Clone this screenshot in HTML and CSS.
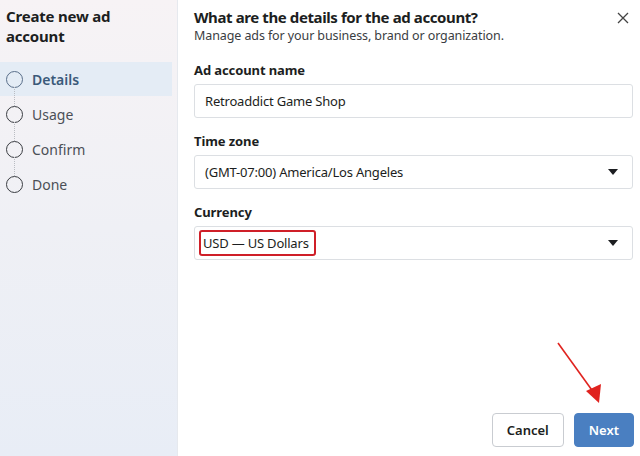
FILE: index.html
```html
<!DOCTYPE html>
<html lang="en">
  <head>
    <meta charset="UTF-8" />
    <meta name="viewport" content="width=device-width, initial-scale=1.0" />
    <title>Create new ad account</title>
    <link rel="stylesheet" href="styles.css">
  </head>
  <body>
    <div class="dialog">
      <aside class="sidebar">
        <h1>Create new ad account</h1>
        <ul class="steps">
          <li class="step active"><span class="dot"></span>Details</li>
          <li class="step"><span class="dot"></span>Usage</li>
          <li class="step"><span class="dot"></span>Confirm</li>
          <li class="step"><span class="dot"></span>Done</li>
        </ul>
      </aside>

      <main class="panel">
        <div class="panel-head">
          <div>
            <h2>What are the details for the ad account?</h2>
            <p class="sub">Manage ads for your business, brand or organization.</p>
          </div>
          <button class="close" aria-label="Close">
            <svg width="12" height="12" viewBox="0 0 12 12">
              <path d="M1 1L11 11M11 1L1 11" stroke="#444" stroke-width="1.3" fill="none" />
            </svg>
          </button>
        </div>

        <label class="field-label">Ad account name</label>
        <div class="field">Retroaddict Game Shop</div>

        <label class="field-label">Time zone</label>
        <div class="field select">
          <span>(GMT-07:00) America/Los Angeles</span>
          <span class="caret"></span>
        </div>

        <label class="field-label">Currency</label>
        <div class="field select">
          <span class="marked">USD — US Dollars</span>
          <span class="caret"></span>
        </div>

        <div class="actions">
          <button class="btn">Cancel</button>
          <button class="btn primary">Next</button>
          <svg class="arrow" width="60" height="70" viewBox="0 0 60 70">
            <line x1="2" y1="2" x2="38" y2="52" stroke="#e0231f" stroke-width="1.6" />
            <path d="M43 62L30 50L45 43Z" fill="#e0231f" />
          </svg>
        </div>
      </main>
    </div>
  </body>
</html>
```

FILE: styles.css
```css
body {
  margin: 0;
  font-family: "Noto Sans", "Open Sans", sans-serif;
  color: #1c1e21;
}

.dialog {
  display: flex;
  width: 640px;
  height: 456px;
  overflow: hidden;
}

.sidebar {
  width: 177px;
  flex-shrink: 0;
  background: linear-gradient(180deg, #f7f3f5 0%, #eff0f5 50%, #e8edf6 100%);
  border-right: 1px solid #e6e9ee;
}

.sidebar h1 {
  margin: 0;
  padding: 6px 6px 0;
  font-size: 15px;
  line-height: 20px;
  font-weight: 700;
  letter-spacing: -0.2px;
  color: #1c1e21;
}

.steps {
  list-style: none;
  margin: 16px 0 0;
  padding: 0;
}

.step {
  position: relative;
  display: flex;
  align-items: center;
  height: 34px;
  margin-bottom: 1px;
  padding-left: 6px;
  margin-right: 5px;
  font-size: 14px;
  color: #4b4f56;
}

.step.active {
  background: #e4ecf5;
  color: #3b5a7a;
  font-weight: 600;
}

.dot {
  width: 17px;
  height: 17px;
  border: 1.5px solid #3a3d42;
  border-radius: 50%;
  margin-right: 9px;
  box-sizing: border-box;
  flex-shrink: 0;
}

.step.active .dot {
  border-color: #5a6f8a;
}

/* dotted link between step circles */
.step + .step::before {
  content: "";
  position: absolute;
  left: 14px;
  top: -10px;
  height: 19px;
  border-left: 1px dotted #b9bcc2;
}

.panel {
  flex: 1;
  background: #fff;
  padding: 7px 8px 0 16px;
  display: flex;
  flex-direction: column;
}

.panel-head {
  display: flex;
  justify-content: space-between;
  align-items: flex-start;
  margin-bottom: 16px;
}

.panel-head h2 {
  margin: 0;
  font-size: 15px;
  line-height: 20px;
  font-weight: 700;
  letter-spacing: -0.4px;
}

.sub {
  margin: 0;
  font-size: 12.5px;
  line-height: 18px;
  letter-spacing: -0.1px;
  color: #3a3d42;
}

.close {
  border: none;
  background: none;
  padding: 4px 5px;
  margin-top: 1px;
  cursor: pointer;
}

.field-label {
  display: block;
  font-size: 13px;
  font-weight: 700;
  line-height: 18px;
  letter-spacing: -0.1px;
  margin-bottom: 5px;
}

.field {
  display: flex;
  align-items: center;
  justify-content: space-between;
  height: 34px;
  width: 439px;
  box-sizing: border-box;
  padding: 0 14px 0 10px;
  border: 1px solid #dcdfe3;
  border-radius: 3px;
  font-size: 13px;
  letter-spacing: -0.2px;
  color: #1c1e21;
  margin-bottom: 14px;
}

.caret {
  width: 0;
  height: 0;
  border-left: 5px solid transparent;
  border-right: 5px solid transparent;
  border-top: 6px solid #1c1e21;
}

.marked {
  border: 2px solid #cf1f28;
  border-radius: 3px;
  padding: 2px 5px 2px 2px;
  margin-left: -6px;
}

.actions {
  position: relative;
  margin-top: auto;
  margin-bottom: 9px;
  display: flex;
  justify-content: flex-end;
  gap: 10px;
  width: 440px;
}

.btn {
  height: 34px;
  padding: 0 14px;
  font-family: inherit;
  font-size: 13px;
  font-weight: 600;
  border: 1px solid #c9ccd1;
  border-radius: 4px;
  background: #fff;
  color: #1c1e21;
  cursor: pointer;
}

.btn.primary {
  background: #4a7fc1;
  border-color: #4a7fc1;
  color: #fff;
  padding: 0 14px;
}

.arrow {
  position: absolute;
  left: 362px;
  bottom: 36px;
}
```
